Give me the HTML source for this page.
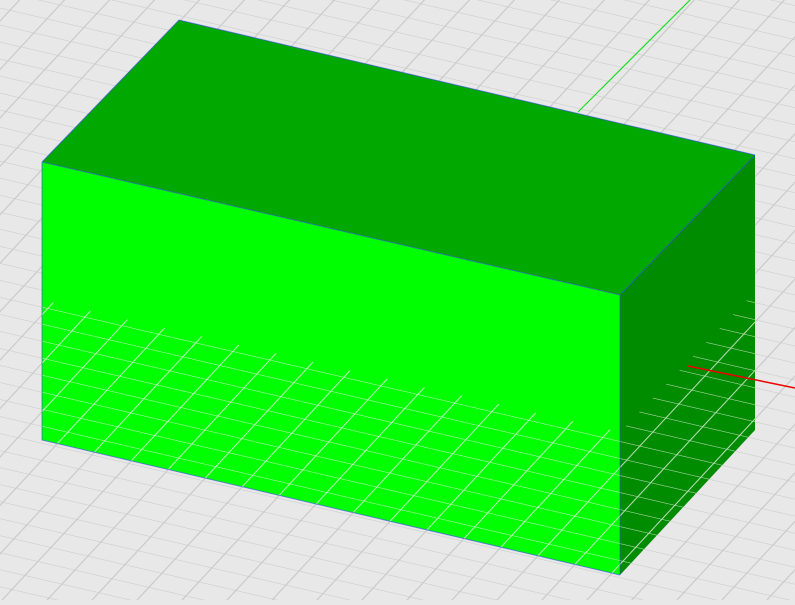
<!DOCTYPE html>
<html><head><style>html,body{margin:0;padding:0;background:#e8e8e8;overflow:hidden}</style></head>
<body>
<svg width="795" height="600" viewBox="0 0 795 600" xmlns="http://www.w3.org/2000/svg">
<defs>
<pattern id="g1" width="100" height="100" patternUnits="userSpaceOnUse" patternTransform="matrix(0.37 0.086 0.13 -0.14 10 300)">
<path d="M0 0H100M0 0V100" stroke="#c9c9c9" stroke-width="7" fill="none"/>
</pattern>
<pattern id="g2" width="100" height="100" patternUnits="userSpaceOnUse" patternTransform="matrix(0.37 0.086 0.13 -0.14 10 300)">
<path d="M0 0H100M0 0V100" stroke="#e4f0e4" stroke-width="6" fill="none" opacity="0.85"/>
</pattern>
<clipPath id="low"><polygon points="42,300 620,432 755,292 755,600 0,600 0,300"/></clipPath>
</defs>
<rect width="795" height="600" fill="#e8e8e8"/>
<rect width="795" height="600" fill="url(#g1)"/>
<line x1="578" y1="112" x2="690" y2="0" stroke="#22dd22" stroke-width="1.2"/>
<polygon points="179,20 755,155 620,295 42,162" fill="#00a800"/>
<polygon points="42,162 620,295 620,575 42,440" fill="#00ff00"/>
<polygon points="620,295 755,155 755,430 620,575" fill="#008c00"/>
<g clip-path="url(#low)"><polygon points="42,162 620,295 755,155 755,430 620,575 42,440" fill="url(#g2)"/></g>
<line x1="688" y1="366" x2="795" y2="388" stroke="#ee0000" stroke-width="1.5"/>
<path d="M42,162 L179,20 L755,155 M42,162 L620,295 L755,155 M620,295 L620,575 M42,162 L42,440 L620,575" stroke="#3344ee" stroke-width="1" fill="none" opacity="0.6"/>
</svg>
</body></html>
